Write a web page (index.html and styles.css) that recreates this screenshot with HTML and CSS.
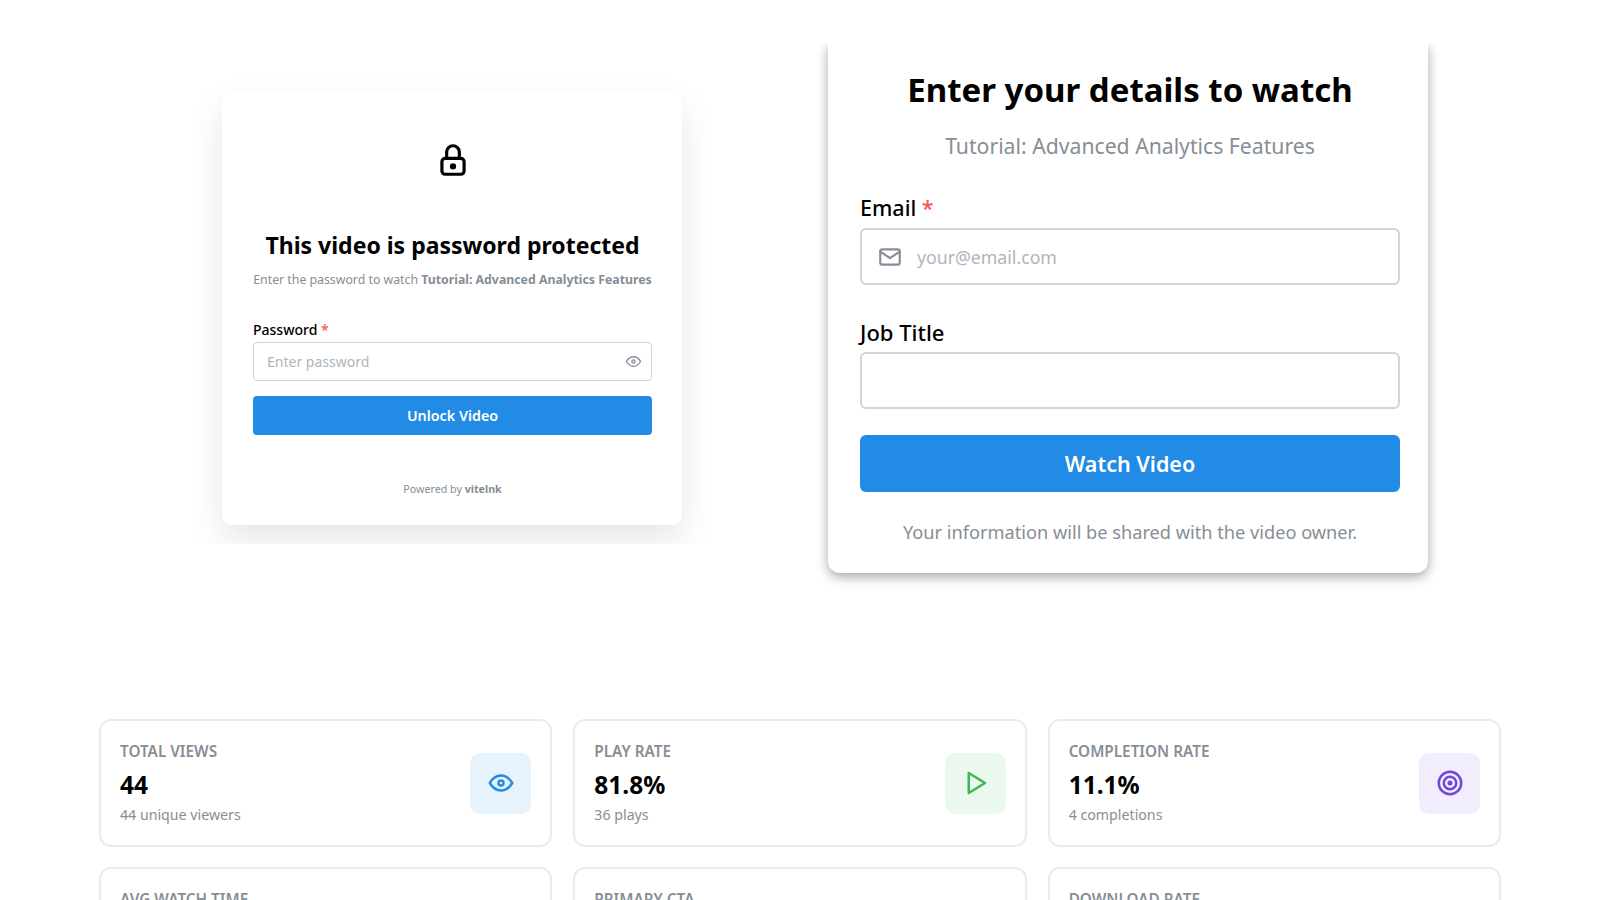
FILE: index.html
```html
<!DOCTYPE html>
<html>
<head>
    <title>Video Analytics</title>
    <link rel="stylesheet" href="styles.css">
</head>
<body>
    <div class="showcase">
        <div class="password-clip">
            <div class="password-card">
                <svg class="lock-icon" viewBox="0 0 24 24">
                    <path d="M5 13a2 2 0 0 1 2 -2h10a2 2 0 0 1 2 2v6a2 2 0 0 1 -2 2h-10a2 2 0 0 1 -2 -2v-6z"/>
                    <path d="M11 16a1 1 0 1 0 2 0a1 1 0 0 0 -2 0"/>
                    <path d="M8 11v-4a4 4 0 1 1 8 0v4"/>
                </svg>
                <h2>This video is password protected</h2>
                <p class="password-hint">Enter the password to watch <strong>Tutorial: Advanced Analytics Features</strong></p>
                <label class="small-label">Password <span class="req">*</span></label>
                <div class="small-input">
                    <span>Enter password</span>
                    <svg class="toggle-icon" viewBox="0 0 24 24">
                        <path d="M10 12a2 2 0 1 0 4 0a2 2 0 0 0 -4 0"/>
                        <path d="M21 12c-2.4 4 -5.4 6 -9 6c-3.6 0 -6.6 -2 -9 -6c2.4 -4 5.4 -6 9 -6c3.6 0 6.6 2 9 6"/>
                    </svg>
                </div>
                <button class="small-button">Unlock Video</button>
                <p class="powered">Powered by <strong>vitelnk</strong></p>
            </div>
        </div>

        <div class="gate-clip">
            <div class="gate-card">
                <h1>Enter your details to watch</h1>
                <p class="gate-subtitle">Tutorial: Advanced Analytics Features</p>
                <label class="big-label">Email <span class="req">*</span></label>
                <div class="big-input">
                    <svg class="mail-icon" viewBox="0 0 24 24">
                        <path d="M3 7a2 2 0 0 1 2 -2h14a2 2 0 0 1 2 2v10a2 2 0 0 1 -2 2h-14a2 2 0 0 1 -2 -2v-10z"/>
                        <path d="M3 7l9 6l9 -6"/>
                    </svg>
                    <span>your@email.com</span>
                </div>
                <label class="big-label job-label">Job Title</label>
                <div class="big-input"></div>
                <button class="big-button">Watch Video</button>
                <p class="gate-note">Your information will be shared with the video owner.</p>
            </div>
        </div>
    </div>

    <div class="stats">
        <div class="stat-card">
            <div class="stat-text">
                <div class="stat-label">TOTAL VIEWS</div>
                <div class="stat-value">44</div>
                <div class="stat-sub">44 unique viewers</div>
            </div>
            <div class="stat-icon blue">
                <svg viewBox="0 0 24 24">
                    <path d="M10 12a2 2 0 1 0 4 0a2 2 0 0 0 -4 0"/>
                    <path d="M21 12c-2.4 4 -5.4 6 -9 6c-3.6 0 -6.6 -2 -9 -6c2.4 -4 5.4 -6 9 -6c3.6 0 6.6 2 9 6"/>
                </svg>
            </div>
        </div>
        <div class="stat-card">
            <div class="stat-text">
                <div class="stat-label">PLAY RATE</div>
                <div class="stat-value">81.8%</div>
                <div class="stat-sub">36 plays</div>
            </div>
            <div class="stat-icon green">
                <svg viewBox="0 0 24 24"><path d="M7 4v16l13 -8z"/></svg>
            </div>
        </div>
        <div class="stat-card">
            <div class="stat-text">
                <div class="stat-label">COMPLETION RATE</div>
                <div class="stat-value">11.1%</div>
                <div class="stat-sub">4 completions</div>
            </div>
            <div class="stat-icon violet">
                <svg viewBox="0 0 24 24">
                    <path d="M11 12a1 1 0 1 0 2 0a1 1 0 1 0 -2 0"/>
                    <path d="M7 12a5 5 0 1 0 10 0a5 5 0 1 0 -10 0"/>
                    <path d="M3 12a9 9 0 1 0 18 0a9 9 0 1 0 -18 0"/>
                </svg>
            </div>
        </div>
        <div class="stat-card">
            <div class="stat-text">
                <div class="stat-label">AVG WATCH TIME</div>
            </div>
        </div>
        <div class="stat-card">
            <div class="stat-text">
                <div class="stat-label">PRIMARY CTA</div>
            </div>
        </div>
        <div class="stat-card">
            <div class="stat-text">
                <div class="stat-label">DOWNLOAD RATE</div>
            </div>
        </div>
    </div>
</body>
</html>
```

FILE: styles.css
```css
html, body { margin: 0; height: 900px; overflow: hidden; background: #fff; }
body { font-family: "Noto Sans", "Open Sans", sans-serif; color: #000; }
* { box-sizing: border-box; }
svg { fill: none; stroke: currentColor; stroke-width: 2; stroke-linecap: round; stroke-linejoin: round; display: block; }
p, h1, h2 { margin: 0; }

.showcase { height: 719px; display: flex; align-items: flex-start; }

/* password card */
.password-clip { margin-left: 190px; padding: 0 32px; margin-top: 64px; height: 480px; overflow: hidden; width: 524px; }
.password-card { margin-top: 28px; width: 460px; height: 433px; padding: 49px 30px 0 31px; background: #fff; border-radius: 10px; box-shadow: 0 15px 35px rgba(0,0,0,.1); display: flex; flex-direction: column; }
.lock-icon { width: 38px; height: 38px; margin: 0 auto; }
.password-card h2 { font-size: 23px; line-height: 32px; font-weight: 700; text-align: center; margin-top: 50px; white-space: nowrap; }
.password-hint { font-size: 12.3px; line-height: 18px; color: #868e96; text-align: center; margin-top: 10px; white-space: nowrap; }
.small-label { font-size: 14px; line-height: 20px; font-weight: 500; margin-top: 31px; }
.req { color: #fa5252; }
.small-input { height: 39px; margin-top: 2px; border: 1px solid #ced4da; border-radius: 4px; padding: 0 8px 0 13px; display: flex; align-items: center; justify-content: space-between; font-size: 14px; color: #adb5bd; }
.toggle-icon { width: 19px; height: 19px; color: #868e96; stroke-width: 1.75; }
.small-button { height: 39px; margin-top: 15px; border: none; border-radius: 4px; background: #228be6; color: #fff; font: 600 14.3px "Noto Sans", sans-serif; }
.powered { font-size: 10.7px; line-height: 16px; color: #868e96; text-align: center; margin-top: 46px; }

/* details card */
.gate-clip { margin-left: 84px; margin-top: 44px; padding: 0 30px 30px; overflow: hidden; width: 662px; }
.gate-card { width: 600px; height: 529px; padding: 23px 28px 0 32px; background: #fff; border-radius: 0 0 12px 12px; box-shadow: 0 4px 12px rgba(0,0,0,.35); display: flex; flex-direction: column; }
.gate-card h1 { font-size: 33px; line-height: 46px; font-weight: 700; text-align: center; white-space: nowrap; }
.gate-subtitle { font-size: 21.2px; line-height: 30px; color: #868e96; text-align: center; margin-top: 18px; }
.big-label { font-size: 21.5px; line-height: 30px; font-weight: 500; margin-top: 32px; }
.job-label { font-size: 22px; margin-top: 32px; }
.big-input { height: 57px; margin-top: 5px; border: 2px solid #ced4da; border-radius: 6px; display: flex; align-items: center; padding: 0 15px; font-size: 17.7px; color: #adb5bd; gap: 14px; }
.mail-icon { width: 26px; height: 26px; color: #868e96; }
.big-button { height: 57px; margin-top: 26px; border: none; border-radius: 6px; background: #228be6; color: #fff; font: 600 21.5px "Noto Sans", sans-serif; }
.gate-note { font-size: 18.2px; line-height: 26px; color: #868e96; text-align: center; margin-top: 27px; }

/* stat cards */
.stats { margin: 0 99px; display: grid; grid-template-columns: repeat(3, 1fr); gap: 20px 21px; }
.stat-card { height: 128px; padding: 20px 19px; border: 2px solid #e9ecef; border-radius: 12px; background: #fff; display: flex; align-items: center; justify-content: space-between; }
.stat-text { align-self: flex-start; }
.stat-label { font-size: 15.3px; line-height: 20px; font-weight: 600; color: #868e96; white-space: nowrap; }
.stat-value { font-size: 24.5px; line-height: 34px; font-weight: 700; margin-top: 7px; }
.stat-sub { font-size: 14.2px; line-height: 20px; color: #868e96; margin-top: 3px; }
.stat-icon { width: 61px; height: 61px; border-radius: 10px; display: flex; align-items: center; justify-content: center; }
.stat-icon svg { width: 30px; height: 30px; }
.blue { background: #e7f3fc; color: #228be6; }
.green { background: #ebf8ed; color: #40b653; }
.violet { background: #f1edfd; color: #7048d8; }
```
